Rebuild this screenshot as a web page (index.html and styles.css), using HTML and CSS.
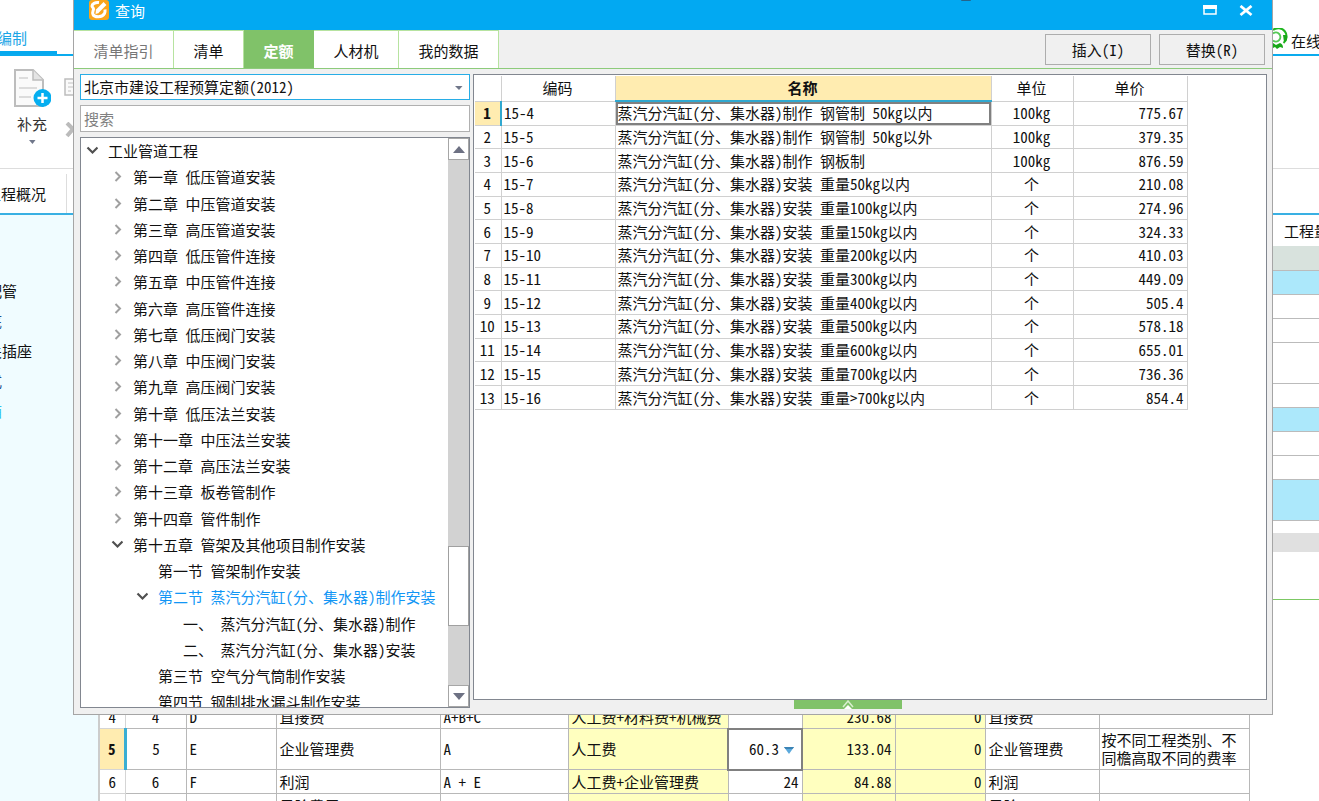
FILE: index.html
```
<!DOCTYPE html>
<html lang="zh-CN">
<head>
<meta charset="utf-8">
<title>查询</title>
<link rel="stylesheet" href="styles.css">
</head>
<body>
<div class="app">
  <header class="menu">
    <a class="menu-tab" href="#">编制</a>
    <a class="support" href="#">
      <svg width="16" height="22" viewBox="0 0 16 22"><path d="M0 2a8 8 0 0 1 10.500 13" fill="none" stroke="#1fb61f" stroke-width="2"/><path d="M0 5.500a4.500 4.500 0 1 1 0 7" fill="none" stroke="#55c955" stroke-width="2"/><path d="M0 20v-5l3 2 4-2c2 1 3 2 3 5l-3-1-3 2-2-2z" fill="#18a818"/><path d="M10 7h4v5l-3 2z" fill="#18a818"/></svg>
      <span>在线</span>
    </a>
  </header>
  <div class="ribbon">
    <button class="ribbon-btn">
      <svg width="38" height="39" viewBox="0 0 38 39"><path d="M2 1h18l10 10v26H2z" fill="#fafafa" stroke="#bdbdbd" stroke-width="2"/><path d="M20 1v10h10" fill="#e4e4e4" stroke="#bdbdbd" stroke-width="1.500"/><path d="M6 9h9M6 19h18M6 28h12" stroke="#dcdcdc" stroke-width="2"/><circle cx="29.500" cy="29" r="9" fill="#05aef0"/><path d="M29.500 24v10M24.500 29h10" stroke="#fff" stroke-width="2.500"/></svg>
      <span>补充</span>
      <svg width="8" height="5" viewBox="0 0 8 5"><path d="M1 0h6.500L4.500 4z" fill="#70778a"/></svg>
    </button>
    <div class="ribbon-more">
      <svg width="16" height="20" viewBox="0 0 16 20"><path d="M1 1h14v16H1z" fill="#fafafa" stroke="#bdbdbd" stroke-width="1.500"/><path d="M4 5h8M4 9h8M4 13h3" stroke="#d5d5d5" stroke-width="1.500"/><path d="M9 9h7v8H9z" fill="#9adcf6"/></svg>
      <svg width="16" height="16" viewBox="0 0 16 16"><path d="M3 1l6 6-6 7M15 1L9 7l6 7" fill="none" stroke="#bbb" stroke-width="4"/></svg>
    </div>
  </div>
  <nav class="subtabs"><a href="#">工程概况</a></nav>
  <div class="work">
    <ul class="side">
      <li>配管</li><li class="navy">底</li><li>关插座</li><li class="navy">式</li><li class="cyan">箱</li>
    </ul>
    <main class="main">
      <section class="upper">
        <table class="items">
          <thead><tr><th></th><th class="qty">工程量</th></tr></thead>
          <tbody>
            <tr class="total"><td></td><td></td></tr>
            <tr class="part"><td></td><td></td></tr>
            <tr><td></td><td></td></tr>
            <tr><td></td><td></td></tr>
            <tr class="tall"><td></td><td></td></tr>
            <tr><td></td><td></td></tr>
            <tr class="part"><td></td><td></td></tr>
            <tr><td></td><td></td></tr>
            <tr><td></td><td></td></tr>
            <tr class="part tall"><td></td><td></td></tr>
          </tbody>
        </table>
        <div class="hscroll"></div>
      </section>
      <table class="fees">
        <colgroup><col class="f-no"><col class="f-seq"><col class="f-code"><col class="f-name"><col class="f-base"><col class="f-desc"><col class="f-rate"><col class="f-amt"><col class="f-zero"><col class="f-kind"><col class="f-note"></colgroup>
        <tbody>
          <tr><th>4</th><td class="mid">4</td><td>D</td><td>直接费</td><td>A+B+C</td><td class="calc">人工费+材料费+机械费</td><td class="num"></td><td class="num calc">230.68</td><td class="num calc zero">0</td><td>直接费</td><td></td></tr>
          <tr class="tall"><th class="current">5</th><td class="mid">5</td><td>E</td><td>企业管理费</td><td>A</td><td class="calc">人工费</td><td class="num editing">60.3<button class="drop" aria-label="选择费率"><svg width="12" height="8" viewBox="0 0 12 8"><path d="M1 0h10L6 7z" fill="#5ba9dc"/><path d="M1 0h10L9.500 2h-7z" fill="#3c83b4"/></svg></button></td><td class="num calc">133.04</td><td class="num calc zero">0</td><td>企业管理费</td><td class="note">按不同工程类别、不同檐高取不同的费率</td></tr>
          <tr><th>6</th><td class="mid">6</td><td>F</td><td>利润</td><td>A + E</td><td class="calc">人工费+企业管理费</td><td class="num">24</td><td class="num calc">84.88</td><td class="num calc zero">0</td><td>利润</td><td></td></tr>
          <tr><th></th><td></td><td></td><td>风险费用</td><td></td><td class="calc"></td><td></td><td class="calc"></td><td class="calc"></td><td>风险</td><td></td></tr>
        </tbody>
      </table>
    </main>
  </div>
</div>

<section class="dialog" role="dialog" aria-labelledby="dlg-title">
  <div class="titlebar">
    <svg width="20" height="20" viewBox="0 0 20 20"><rect width="20" height="20" rx="3" fill="#f9a51c"/><path d="M10 2.500C6 2 3 4 3 6c0 1.500 1.500 1.500 1.500 3S3 12 4 14.500c1.500 3 9 3.500 11.500-1 .8-1.500.6-3 .5-4" fill="none" stroke="#fff" stroke-width="3"/><path d="M8 11.500L16 3.500" stroke="#fff" stroke-width="4"/><path d="M6.500 14l.5-4 3 3z" fill="#fff"/></svg>
    <h1 id="dlg-title">查询</h1>
    <span class="grip"></span>
    <button aria-label="最大化"><svg width="14" height="10" viewBox="0 0 14 10"><path d="M1 1h12v8H1z" fill="none" stroke="#fff" stroke-width="1.500"/><path d="M0 0h14v4H0z" fill="#fff"/></svg></button>
    <button aria-label="关闭"><svg width="14" height="12" viewBox="0 0 14 12"><path d="M1.500 1l11 9M12.500 1l-11 9" stroke="#fff" stroke-width="2.800"/></svg></button>
  </div>
  <div class="toolbar">
    <div class="tabs" role="tablist">
      <button role="tab" class="t-guide">清单指引</button><button role="tab" class="t-short">清单</button><button role="tab" class="t-short active" aria-selected="true">定额</button><button role="tab" class="t-mid">人材机</button><button role="tab" class="t-wide">我的数据</button>
    </div>
    <button class="action">插入(I)</button>
    <button class="action">替换(R)</button>
  </div>
  <div class="panes">
    <div class="left">
      <div class="combo">
        <select aria-label="定额库"><option>北京市建设工程预算定额(2012)</option></select>
        <svg width="8" height="5" viewBox="0 0 8 5"><path d="M0 0h7.500L4 4z" fill="#70778a"/></svg>
      </div>
      <input class="search" type="text" placeholder="搜索" aria-label="搜索">
      <div class="treebox">
        <ul class="tree" role="tree"></ul>
        <div class="scroll">
          <button aria-label="向上"><svg width="12" height="7" viewBox="0 0 12 7"><path d="M0 7l6-7 6 7z" fill="#6d7183"/></svg></button>
          <div class="track"><div class="thumb"></div></div>
          <button aria-label="向下"><svg width="12" height="7" viewBox="0 0 12 7"><path d="M0 0h12L6 7z" fill="#6d7183"/></svg></button>
        </div>
      </div>
    </div>
    <div class="right">
      <div class="gridbox">
        <table class="quota">
          <colgroup><col class="q-no"><col class="q-code"><col class="q-name"><col class="q-unit"><col class="q-price"></colgroup>
          <thead><tr><th></th><th>编码</th><th class="sorted">名称</th><th>单位</th><th>单价</th></tr></thead>
          <tbody></tbody>
        </table>
      </div>
      <button class="expander" aria-label="展开"><svg width="14" height="9" viewBox="0 0 14 9"><path d="M2 7l5-6 5 6" fill="none" stroke="#d9efcf" stroke-width="1.500"/><path d="M3 9l4-4 4 4z" fill="#fff"/></svg></button>
    </div>
  </div>
</section>
<script src="app.js"></script>
</body>
</html>
```
FILE: styles.css
```
* { box-sizing: border-box; }
body {
  margin: 0;
  height: 100vh;
  overflow: hidden;
  position: relative;
  background: #fff;
  color: #111;
}
body, button, input, select, table {
  font-family: "Noto Sans CJK SC", sans-serif;
  font-size: 15px;
  line-height: 20px;
  font-feature-settings: "hwid";
}
a { color: inherit; text-decoration: none; }
ul { list-style: none; margin: 0; padding: 0; }
button { border: 0; padding: 0; margin: 0; background: none; color: inherit; }
table { border-collapse: collapse; table-layout: fixed; }
th, td { padding: 0; font-weight: 400; white-space: nowrap; overflow: hidden; }
svg { display: block; flex: none; }

/* application window */
.app { height: 100vh; display: flex; flex-direction: column; overflow: hidden; }
.menu {
  height: 56px;
  flex: none;
  display: flex;
  justify-content: space-between;
  align-items: flex-end;
  border-bottom: 2px solid #0aabee;
}
.menu-tab {
  width: 57px;
  height: 26px;
  text-indent: -3px;
  color: #1aa5e6;
  border-bottom: 3px solid #05a9ef;
  line-height: 20px;
}
.support { width: 46px; height: 26px; display: flex; gap: 2px; align-items: flex-start; white-space: nowrap; line-height: 26px; }
.ribbon { height: 113px; flex: none; display: flex; gap: 13px; padding: 13px 0 0 13px; border-bottom: 1px solid #ddd; }
.ribbon-btn { display: flex; flex-direction: column; align-items: center; align-self: flex-start; gap: 6px; color: #333; }
.ribbon-more { display: flex; flex-direction: column; gap: 24px; padding-top: 9px; }
.subtabs { height: 46px; flex: none; padding-top: 5px; border-bottom: 2px solid #39b0e3; }
.subtabs a { display: block; width: 67px; height: 39px; line-height: 40px; text-indent: -14px; border-right: 1px solid #ddd; white-space: nowrap; overflow: hidden; }
.work { flex: 1; min-height: 0; display: flex; }
.side { width: 98px; flex: none; background: #f0fcff; padding-top: 61px; line-height: 30px; }
.side li { text-indent: -13px; white-space: nowrap; }
.navy { color: #1d4f8f; }
.cyan { color: #2fc0ee; }
.main { flex: 1; min-width: 0; display: flex; flex-direction: column; gap: 104px; }
.upper { height: 385px; flex: none; border-bottom: 1px solid #7cc864; }
.items { width: 100%; }
.items th { height: 31px; }
.items td { height: 24px; border-bottom: 1px solid #bbb; }
.items .tall td { height: 41px; }
.items .qty { width: 46px; padding-left: 11px; text-align: left; }
.items .total td { background: #d8e2dd; }
.items .part td { background: #ace8fb; }
.hscroll { height: 19px; margin-top: 12px; background: #e0e0e0; }

.fees { width: 1150px; border-left: 2px solid #ccc; }
.fees th, .fees td { height: 24px; border: 1px solid #b8b8b8; border-width: 1px 1px 1px 0; padding: 0 3px; text-align: left; }
.fees th { text-align: center; border-color: #d5d5d5; }
.fees .tall td { height: 41px; }
.fees .mid { text-align: center; }
.fees .num { text-align: right; }
.fees .calc { background: #ffffbf; }
.fees .current { background: #ffecb0; font-weight: 700; border-right: 3px solid #3aaed3; }
.fees .editing { border: 2px solid #808080; }
.fees .note { white-space: normal; line-height: 18px; padding: 0 2px; }
.drop { display: inline-block; margin: 0 3px 0 4px; vertical-align: middle; }
.f-no { width: 26px; } .f-seq { width: 61px; } .f-code { width: 90px; } .f-name { width: 164px; }
.f-base { width: 128px; } .f-desc { width: 160px; } .f-rate { width: 74px; } .f-amt { width: 93px; }
.f-zero { width: 90px; } .f-kind { width: 114px; } .f-note { width: 150px; }

/* query dialog floating over the application */
.dialog {
  position: absolute;
  top: 0;
  bottom: 86px;
  left: 73px;
  right: 46px;
  display: flex;
  flex-direction: column;
  background: #f0f0f0;
  border: 1px solid #a5a5a5;
  border-top: 0;
}
.titlebar { height: 30px; flex: none; display: flex; align-items: flex-start; padding: 0 19px 0 15px; background: #02a9f2; color: #fff; }
.titlebar h1 { margin: 0 0 0 6px; flex: 1; font-size: 15px; font-weight: 400; line-height: 22px; }
.titlebar button { margin: 5px 0 0 22px; }
.grip { width: 10px; height: 1px; margin-right: 210px; background: #24648a; border-radius: 0 0 5px 5px; }
.toolbar { height: 39px; flex: none; display: flex; align-items: flex-start; gap: 8px; padding-right: 7px; border-bottom: 1px solid #8dcb7b; }
.tabs { flex: 1; display: flex; }
.tabs button { height: 38px; line-height: 40px; background: #fff; border-top: 1px solid #b7e3a0; border-right: 1px solid #b7e3a0; }
.tabs .t-guide { width: 100px; color: #777; }
.tabs .t-short { width: 70px; }
.tabs .t-mid { width: 85px; }
.tabs .t-wide { width: 100px; }
.tabs .active { background: #80c269; border-color: #80c269; color: #fff; font-weight: 700; }
.action { width: 106px; height: 31px; margin-top: 4px; border: 1px solid #adadad; background: #f0f0f0; }
.panes { flex: 1; min-height: 0; display: flex; gap: 3px; padding: 5px 5px 0 6px; }
.left { width: 390px; flex: none; display: flex; flex-direction: column; gap: 5px; padding-bottom: 6px; }
.combo { position: relative; height: 26px; flex: none; }
.combo select { display: block; width: 100%; height: 26px; border: 1px solid #28ade6; background: #fff; appearance: none; border-radius: 0; padding: 0 3px; color: #111; }
.combo svg { position: absolute; right: 7px; top: 12px; }
.search { width: 100%; height: 27px; flex: none; border: 1px solid #b0b0b0; background: #fff; padding: 0 3px; }
.search::placeholder { color: #808080; opacity: 1; }
.treebox { flex: 1; min-height: 0; display: flex; border: 1px solid #828790; background: #fff; overflow: hidden; }
.tree { flex: 1; min-width: 0; overflow: hidden; line-height: 1.75; }
.tree li { display: flex; align-items: center; gap: 10px; padding-left: 5px; white-space: pre; }
.tree .lv1 { padding-left: 30px; }
.tree .lv2 { padding-left: 55px; }
.tree .lv3 { padding-left: 80px; }
.tree .picked { color: #1296f5; }
.scroll { width: 21px; display: flex; flex-direction: column; background: #d2d2d2; }
.scroll button { height: 22px; flex: none; display: grid; place-items: center; background: #fff; border: 1px solid #a6a6a6; }
.track { flex: 1; padding-top: 386px; }
.thumb { height: 80px; background: #fff; border: 1px solid #a0a0a0; }
.right { flex: 1; min-width: 0; display: flex; flex-direction: column; }
.gridbox { flex: 1; min-height: 0; background: #fff; border: 1px solid #828790; padding: 1px; }
.quota { width: 712px; height: 334px; }
.quota th, .quota td { border: 1px solid #d0d0d0; border-width: 0 1px 1px 0; padding: 0 3px 0 2px; white-space: pre; }
.quota thead th { height: 25px; }
.quota .sorted { background: #ffecb0; font-weight: 700; border-bottom: 2px solid #30a8d0; }
.quota .mid { text-align: center; }
.quota .num { text-align: right; }
.quota .current { background: #ffecb0; font-weight: 700; border-right: 2px solid #30a8d0; }
.quota .editing { box-shadow: inset 0 0 0 2px #808080; }
.q-no { width: 26px; } .q-code { width: 114px; } .q-name { width: 376px; } .q-unit { width: 82px; } .q-price { width: 114px; }
.expander { width: 108px; height: 9px; margin: 0 0 5px 321px; background: #80c269; display: grid; place-items: center; }
```
FILE: app.js
```
const closed = '<svg width="12" height="12" viewBox="0 0 12 12"><path d="M4.500 1l4.500 4.500-4.500 4.500" fill="none" stroke="#a0a0a0" stroke-width="2"/></svg>';
const opened = '<svg width="12" height="12" viewBox="0 0 12 12"><path d="M1.500 2.500l5 5 5-5" fill="none" stroke="#505050" stroke-width="2.200"/></svg>';
const leaf = '<svg width="12" height="12"></svg>';

const nodes = [
  [0, '工业管道工程', opened],
  [1, '第一章 低压管道安装', closed],
  [1, '第二章 中压管道安装', closed],
  [1, '第三章 高压管道安装', closed],
  [1, '第四章 低压管件连接', closed],
  [1, '第五章 中压管件连接', closed],
  [1, '第六章 高压管件连接', closed],
  [1, '第七章 低压阀门安装', closed],
  [1, '第八章 中压阀门安装', closed],
  [1, '第九章 高压阀门安装', closed],
  [1, '第十章 低压法兰安装', closed],
  [1, '第十一章 中压法兰安装', closed],
  [1, '第十二章 高压法兰安装', closed],
  [1, '第十三章 板卷管制作', closed],
  [1, '第十四章 管件制作', closed],
  [1, '第十五章 管架及其他项目制作安装', opened],
  [2, '第一节 管架制作安装', leaf],
  [2, '第二节 蒸汽分汽缸(分、集水器)制作安装', opened, 'picked'],
  [3, '一、 蒸汽分汽缸(分、集水器)制作', leaf],
  [3, '二、 蒸汽分汽缸(分、集水器)安装', leaf],
  [2, '第三节 空气分气筒制作安装', leaf],
  [2, '第四节 钢制排水漏斗制作安装', leaf]
];
document.querySelector('.tree').innerHTML = nodes.map(([level, label, icon, state]) =>
  `<li role="treeitem" class="lv${level} ${state || ''}">${icon}<span>${label}</span></li>`).join('');

const base = '蒸汽分汽缸(分、集水器)';
const quotas = [
  ['制作 钢管制 50kg以内', '100kg', '775.67'],
  ['制作 钢管制 50kg以外', '100kg', '379.35'],
  ['制作 钢板制', '100kg', '876.59'],
  ['安装 重量50kg以内', '个', '210.08'],
  ['安装 重量100kg以内', '个', '274.96'],
  ['安装 重量150kg以内', '个', '324.33'],
  ['安装 重量200kg以内', '个', '410.03'],
  ['安装 重量300kg以内', '个', '449.09'],
  ['安装 重量400kg以内', '个', '505.4'],
  ['安装 重量500kg以内', '个', '578.18'],
  ['安装 重量600kg以内', '个', '655.01'],
  ['安装 重量700kg以内', '个', '736.36'],
  ['安装 重量&gt;700kg以内', '个', '854.4']
];
document.querySelector('.quota tbody').innerHTML = quotas.map(([name, unit, price], i) =>
  `<tr><th class="${i ? '' : 'current'}">${i + 1}</th><td>15-${i + 4}</td><td class="${i ? '' : 'editing'}">${base}${name}</td><td class="mid">${unit}</td><td class="num">${price}</td></tr>`).join('');
```
